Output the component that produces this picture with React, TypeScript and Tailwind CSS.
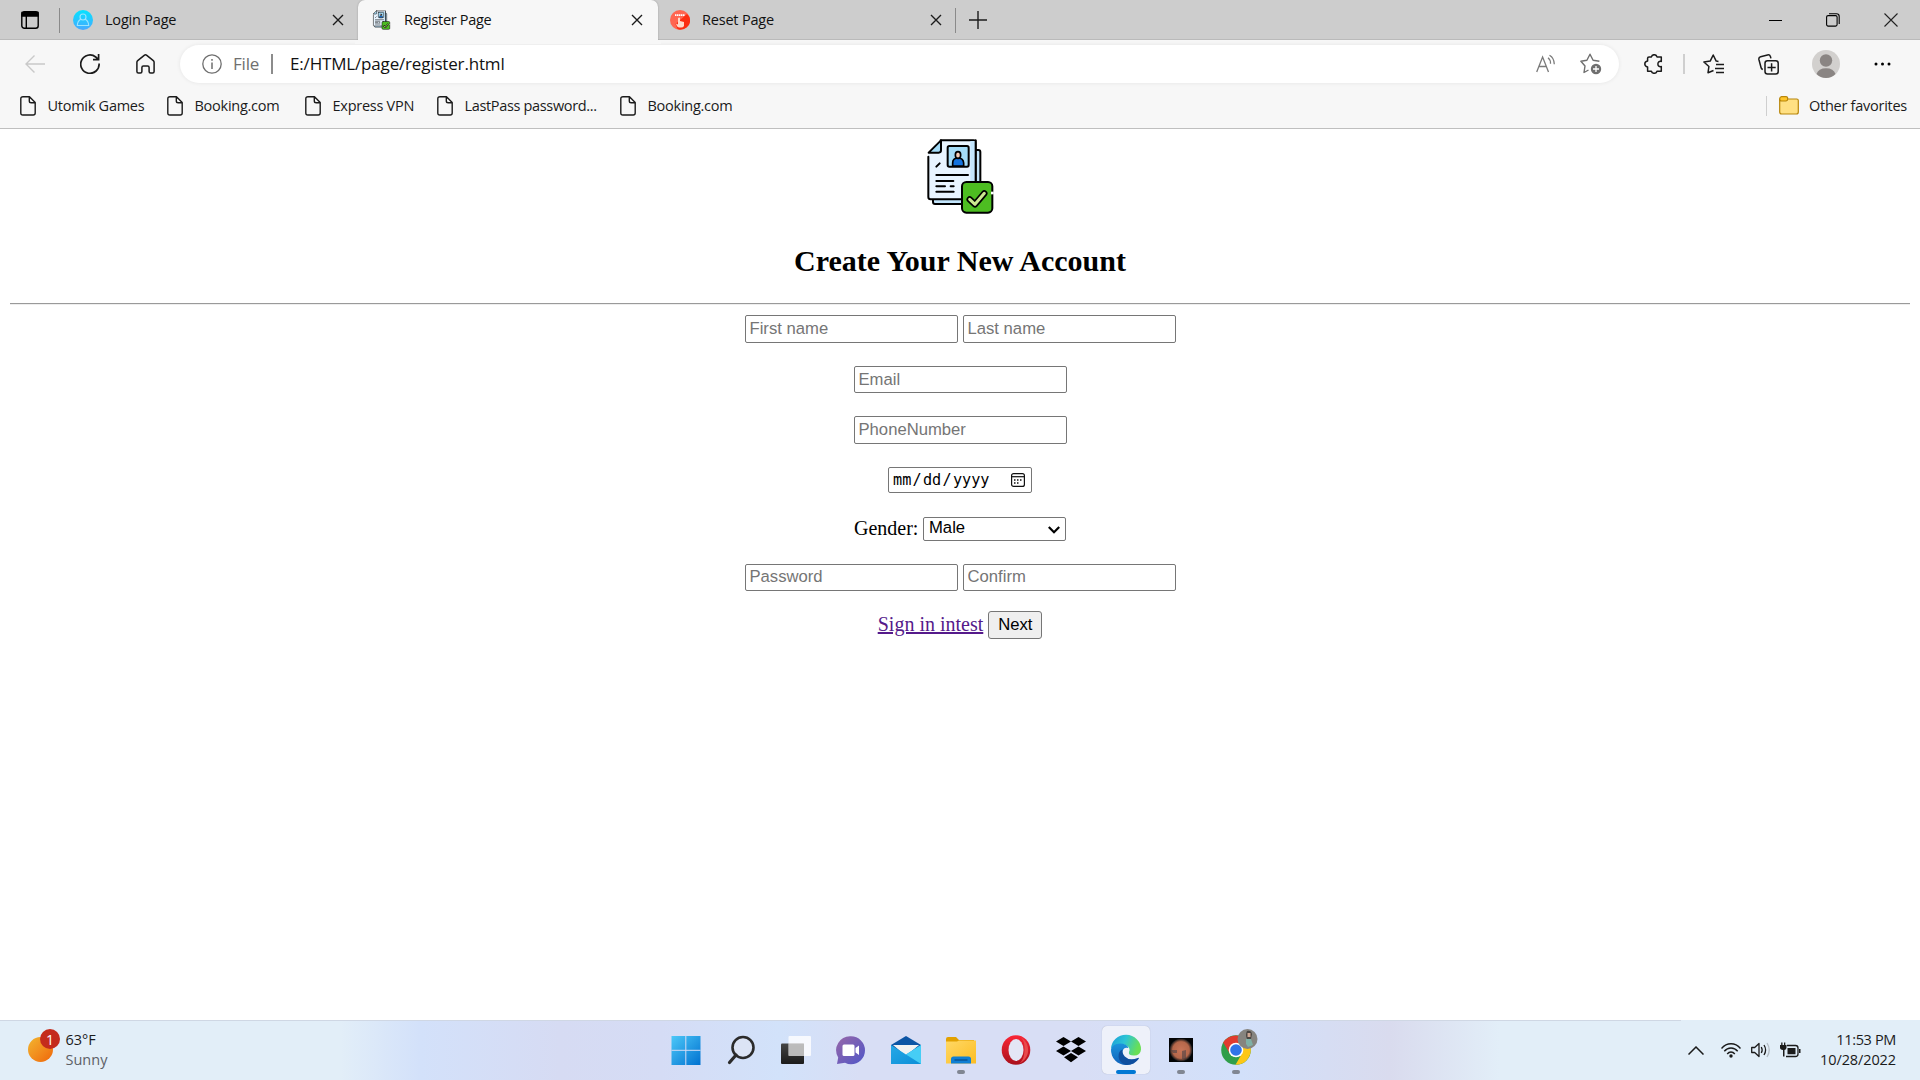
import React from "react";

const ui = "font-['Open_Sans','Noto_Sans',sans-serif]";

function Close() {
  return (
    <svg width="12" height="12" viewBox="0 0 12 12" className="shrink-0" fill="none" stroke="#1b1b1b" strokeWidth="1.35">
      <path d="M1 1l10 10M11 1L1 11" />
    </svg>
  );
}

function DocumentArt({ className }: { className: string }) {
  return (
    <svg className={className} viewBox="0 0 270 276" fill="none" strokeLinecap="round" strokeLinejoin="round" stroke="#000" strokeWidth="6">
      <path d="M60 60h130q6 0 6 6v150q0 6-6 6H60q-6 0-6-6V60z" fill="#c3e6fd" />
      <path d="M77 31h98q7 0 7 7v163q0 7-7 7H47q-7 0-7-7V68z" fill="#e8f4ff" stroke="none" />
      <path d="M40 80v121q0 7 7 7h92M77 31h98q7 0 7 7v117" />
      <path d="M166 33h14v120h-14z" fill="#c3e6fd" stroke="none" />
      <path d="M182 31v122" />
      <path d="M78 31v30q0 7-7 7H41z" fill="#a4dcf8" />
      <rect x="98" y="48" width="63" height="62" rx="5" fill="#a4dcf8" />
      <path d="M113 108v-9q0-15 16-15t17 15v9z" fill="#1373de" strokeWidth="5" />
      <ellipse cx="129" cy="75" rx="8" ry="10" fill="#f8cdb9" strokeWidth="5" />
      <path d="M64 110l10-10M64 135h95M64 153h51M64 169h26M107 169h9M64 185h52" />
      <rect x="141" y="156" width="91" height="92" rx="13" fill="#4dbd21" />
      <path d="M232 185v8" stroke="#fff" strokeWidth="8" strokeLinecap="butt" />
      <path d="M164 208l16 15 28-33" strokeWidth="19" />
      <path d="M164 208l16 15 28-33" stroke="#cbe98f" strokeWidth="9" />
    </svg>
  );
}

function PageIcon() {
  return (
    <svg width="16" height="20" viewBox="0 0 16 20" className="shrink-0" fill="none" stroke="#1b1b1b" strokeWidth="1.4" strokeLinejoin="round">
      <path d="M3 .8h6.500L15.200 6.600V17q0 2-2 2H2.800q-2 0-2-2V2.800q0-2 2.200-2zM9.300 1v4q0 1.800 1.800 1.800h4" />
    </svg>
  );
}

function TabStrip() {
  return (
    <div className="relative flex h-10 items-center bg-[#cdcdcd] text-[14.5px] text-[#111]">
      <div className="absolute inset-x-0 bottom-0 h-px bg-[#bababa]" />
      <svg width="18" height="18" viewBox="0 0 18 18" className="ml-[21px]" fill="none" stroke="#000" strokeWidth="1.4">
        <rect x=".8" y=".8" width="16.4" height="16.4" rx="2.5" />
        <path d="M1 1.500h16V5H1z" fill="#000" />
        <path d="M5.300 5v12" />
      </svg>
      <div className="ml-5 h-[25px] w-px bg-[#8a8a8a]" />
      <div className="flex w-[298px] items-center pl-[13px]">
        <svg width="20" height="20" viewBox="0 0 20 20">
          <defs>
            <linearGradient id="login" x1="0" y1="0" x2="0" y2="1">
              <stop stopColor="#05e3ff" />
              <stop offset="1" stopColor="#48a9ff" />
            </linearGradient>
          </defs>
          <circle cx="10" cy="10" r="10" fill="url(#login)" />
          <g fill="none" stroke="#9be4ff" strokeWidth="1.1">
            <circle cx="10" cy="7" r="3" />
            <path d="M7.800 9.300Q4.500 11 4.300 15.500h11.400Q15.500 11 12.200 9.300" />
          </g>
        </svg>
        <span className="ml-3 w-[227px] whitespace-nowrap tracking-[-0.2px]">Login Page</span>
        <Close />
      </div>
      <div className="relative z-10 flex h-10 w-[300px] items-center rounded-t-[7px] bg-[#f7f7f7] pl-[12px] shadow-[0_0_2px_rgba(0,0,0,0.25)]">
        <div className="absolute inset-x-[-3px] -bottom-1 h-1 bg-[#f7f7f7]" />
        <DocumentArt className="h-6 w-[23px]" />
        <span className="ml-[11px] w-[227px] whitespace-nowrap tracking-[-0.3px]">Register Page</span>
        <Close />
      </div>
      <div className="flex w-[297px] items-center pl-3">
        <svg width="20" height="20" viewBox="0 0 20 20">
          <circle cx="10" cy="10" r="10" fill="#ff6550" />
          <path d="M17 4l2.500 3q2 7-3 10.500-4 3-9 1.500l-2-5z" fill="#fb2e12" />
          <path d="M5 5.200h10" stroke="#fff" strokeWidth="1.800" strokeDasharray="1.500 .5" />
          <path d="M8 8q1.500-1.200 2 0v3l4 1v4q-1 2-4 1.500-3 .5-4-4l2 1z" fill="#ffd9c9" />
        </svg>
        <span className="ml-[12px] w-[228px] whitespace-nowrap tracking-[-0.2px]">Reset Page</span>
        <Close />
      </div>
      <div className="h-[25px] w-px bg-[#8a8a8a]" />
      <svg width="18" height="18" viewBox="0 0 18 18" className="ml-[13px]" stroke="#1b1b1b" strokeWidth="1.400">
        <path d="M0 9h18M9 0v18" />
      </svg>
      <div className="mr-[22px] ml-auto flex items-center gap-[44px]">
        <div className="h-px w-[13px] bg-black" />
        <svg width="14" height="14" viewBox="0 0 14 14" fill="none" stroke="#000" strokeWidth="1.100">
          <rect x=".6" y="2.600" width="10.500" height="10.500" rx="1.500" />
          <path d="M3 .7h7.500q2.700 0 2.700 2.700V11" />
        </svg>
        <svg width="14" height="14" viewBox="0 0 14 14" stroke="#222" strokeWidth="1.100">
          <path d="M.5.5l13 13M13.500.5l-13 13" />
        </svg>
      </div>
    </div>
  );
}

function Toolbar() {
  return (
    <div className="flex h-12 items-center bg-[#f7f7f7]">
      <svg width="20" height="18" viewBox="0 0 20 18" className="ml-[25px]" fill="none" stroke="#c9c9c9" strokeWidth="1.400">
        <path d="M20 9H1M9.500.500L1 9l8.500 8.500" />
      </svg>
      <svg width="20" height="20" viewBox="0 0 20 20" className="ml-[35px]" fill="none" stroke="#1b1b1b" strokeWidth="1.700">
        <path d="M19.100 9.500a9.200 9.200 0 1 1-3.400-6.500L18.300 5.300M18.600 0v5.600H13" />
      </svg>
      <svg width="19" height="20" viewBox="0 0 19 20" className="ml-[36px]" fill="none" stroke="#1b1b1b" strokeWidth="1.500" strokeLinejoin="round">
        <path d="M.9 8.300q0-1 .8-1.700L8.200 1.300q1.300-1 2.600 0l6.500 5.300q.8.700.8 1.700v9.200q0 1.500-1.500 1.500h-2q-1.500 0-1.500-1.500v-4q0-1.500-1.500-1.500H7.400q-1.500 0-1.500 1.500v4q0 1.500-1.500 1.500h-2q-1.500 0-1.500-1.500z" />
      </svg>
      <div className="ml-[25px] flex h-[38px] w-[1439px] items-center rounded-full bg-white text-[17px] shadow-[0_0_4px_rgba(0,0,0,0.08)]">
        <svg width="20" height="20" viewBox="0 0 20 20" className="ml-[22px]" fill="none" stroke="#6f6f6f" strokeWidth="1.300">
          <circle cx="10" cy="10" r="9.200" />
          <path d="M10 8.500V15M10 5v1.800" strokeWidth="1.500" />
        </svg>
        <span className="ml-[11px] w-[38px] tracking-[-0.2px] text-[#6f6f6f]">File</span>
        <div className="h-5 w-0.5 bg-[#8c8c8c]" />
        <span className="ml-[17px] whitespace-nowrap tracking-[-0.17px] text-[#111]">E:/HTML/page/register.html</span>
        <svg width="20" height="20" viewBox="0 0 20 20" className="ml-auto" fill="none" stroke="#7a7a7a" strokeWidth="1.300">
          <path d="M.700 18L6.600 3l5.900 15M2.800 12.500h7.600M12 3.700q2.700 2 2.500 6M13.500 1.300q4.600 2.500 4.800 9" />
        </svg>
        <svg width="22" height="22" viewBox="0 0 22 22" className="mr-[17px] ml-[24px]" fill="none" stroke="#6f6f6f" strokeWidth="1.400" strokeLinejoin="round">
          <path d="M8.500 17l-4.500 2.500 1-6.500L.900 8.300l6-1L10 1.200l3.100 6.100 6.300 1" />
          <circle cx="16" cy="16" r="5.200" fill="#6f6f6f" stroke="none" />
          <path d="M16 13v6M13 16h6" stroke="#fff" strokeWidth="1.300" />
        </svg>
      </div>
      <svg width="19" height="20" viewBox="0 0 19 20" className="ml-[25px]" fill="none" stroke="#1b1b1b" strokeWidth="1.500" strokeLinejoin="round">
        <path d="M5 2.900h2.400q.6-2.200 2.800-2.200T13 2.900h4.300v4.500q-3.400-.5-3.400 2.600t3.400 2.600v4.600H13q-.6 2.100-2.800 2.100t-2.800-2.100H3.600v-4.300Q.800 12.300.800 10t2.800-2.900V4.300q0-1.400 1.400-1.400z" />
      </svg>
      <div className="ml-[20px] h-5 w-0.5 bg-[#cfcfcf]" />
      <svg width="21" height="20" viewBox="0 0 21 20" className="ml-[18px]" fill="none" stroke="#1b1b1b" strokeWidth="1.500" strokeLinejoin="round">
        <path d="M10.500 16.500L5 18.800l.9-6.300L.900 8l6.300-.9L10.200 1l3 6.100 2.300.3M13 10.500h8M12 14.500h9M13 18.500h8" />
      </svg>
      <svg width="21" height="21" viewBox="0 0 21 21" className="ml-[34px]" fill="none" stroke="#1b1b1b" strokeWidth="1.500" strokeLinejoin="round">
        <path d="M4.800 15.500q-1.300-.4-1.700-1.800L.900 5.500Q.500 3.300 2.600 2.700L9.500.900q2.200-.5 2.900 1.500l.5 2" />
        <rect x="7" y="6.800" width="13.200" height="13.200" rx="2.500" />
        <path d="M13.600 9.300v8.200M9.500 13.400h8.200" />
      </svg>
      <svg width="28" height="28" viewBox="0 0 28 28" className="ml-[33px]">
        <circle cx="14" cy="14" r="14" fill="#d2d0ce" />
        <circle cx="14" cy="10.500" r="6.200" fill="#8a8583" />
        <path d="M4.500 24q2-5.800 9.500-5.800t9.500 5.800q-4 4-9.500 4t-9.500-4z" fill="#8a8583" />
      </svg>
      <svg width="17" height="4" viewBox="0 0 17 4" className="ml-[34px]">
        <circle cx="2" cy="2" r="1.500" />
        <circle cx="8.500" cy="2" r="1.500" />
        <circle cx="15" cy="2" r="1.500" />
      </svg>
    </div>
  );
}

function Favorite({ label, className }: { label: string; className: string }) {
  return (
    <div className={`flex items-center gap-[11.5px] whitespace-nowrap ${className}`}>
      <PageIcon />
      <span>{label}</span>
    </div>
  );
}

function FavoritesBar() {
  return (
    <div className="flex h-[41px] items-start border-b border-[#bfbfbf] bg-[#f7f7f7] pl-5 text-[14.5px] tracking-[-0.26px] text-[#1b1b1b]">
      <div className="flex h-[35px] grow items-center">
        <Favorite label="Utomik Games" className="w-[147px]" />
        <Favorite label="Booking.com" className="w-[138px]" />
        <Favorite label="Express VPN" className="w-[132px]" />
        <Favorite label="LastPass password..." className="w-[183px] tracking-[-0.34px]" />
        <Favorite label="Booking.com" className="w-[140px]" />
        <div className="ml-auto h-5 w-px bg-[#cfcfcf]" />
        <svg width="20" height="19" viewBox="0 0 20 19" className="ml-3" stroke="#b8860b" strokeWidth="1.200">
          <path d="M.700 3h17q1.600 0 1.600 1.600V16q0 2-2 2H2.700q-2 0-2-2z" fill="#ffe083" />
          <path d="M2.500.700H7q1.700 0 1.700 2T7 5H2.500Q.700 5 .700 3t1.800-2.300z" fill="#ffc62b" />
        </svg>
        <span className="ml-[10px] w-[111px] whitespace-nowrap">Other favorites</span>
      </div>
    </div>
  );
}

const field =
  "w-[213px] rounded-[2px] border border-[#767676] bg-white pl-1 font-['Liberation_Sans',Arial,sans-serif] text-[16.67px] leading-[19px] text-black placeholder:text-[#757575] placeholder:opacity-100 outline-none";

function RegisterPage() {
  return (
    <main className="flex grow flex-col items-center bg-white font-['Liberation_Serif','Times_New_Roman',serif] text-[20px] text-black">
      <DocumentArt className="mt-px h-[92px] w-[90px]" />
      <h2 className="mt-[19px] text-[30px] leading-[40px] font-bold">Create Your New Account</h2>
      <hr className="mt-[22px] h-0.5 w-[1900px] border-t border-b border-t-[#9a9a9a] border-b-[#eeeeee]" />
      <div className="mt-[10px] flex gap-[5px]">
        <input className={`h-7 ${field}`} placeholder="First name" />
        <input className={`h-7 ${field}`} placeholder="Last name" />
      </div>
      <input className={`mt-[23px] h-[27px] ${field}`} placeholder="Email" />
      <input className={`mt-[23px] h-7 ${field}`} placeholder="PhoneNumber" />
      <div className="mt-[23px] flex h-[26px] w-[144px] items-center rounded-[2px] border border-[#767676] pl-1 font-['DejaVu_Sans_Mono',monospace] text-[15.2px] leading-6">
        <span>mm</span>
        <span className="mx-[1.25px]">/</span>
        <span>dd</span>
        <span className="mx-[1.25px]">/</span>
        <span>yyyy</span>
        <svg width="14" height="14" viewBox="0 0 14 14" className="mr-1.5 ml-auto" fill="none" stroke="#111" strokeWidth="1.200">
          <rect x=".600" y=".600" width="12.800" height="12.800" rx="2" />
          <path d="M.600 3.700h12.800" />
          <path d="M6 7h1.500M9 7h1.500M3 7h1.500M3 10h1.500M6 10h1.500" strokeWidth="1.600" />
        </svg>
      </div>
      <div className="mt-6 flex h-6 items-start">
        <label className="-mt-px w-[69px] leading-6">Gender:</label>
        <div className="relative flex h-6 w-[143px]">
          <select className="block h-6 w-full appearance-none rounded-[2px] border border-[#767676] bg-white pb-0.5 pl-[5px] font-['Liberation_Sans',Arial,sans-serif] text-[16.67px] leading-5">
            <option>Male</option>
          </select>
          <svg width="12" height="8" viewBox="0 0 12 8" className="absolute top-[9px] right-[6px]" fill="none" stroke="#000" strokeWidth="2.200">
            <path d="M.8 1L6 6.200 11.200 1" />
          </svg>
        </div>
      </div>
      <div className="mt-[23px] flex gap-[5px]">
        <input className={`h-[27px] pb-0.5 ${field}`} placeholder="Password" />
        <input className={`h-[27px] pb-0.5 ${field}`} placeholder="Confirm" />
      </div>
      <div className="mt-5 flex h-7 items-start">
        <a className="mt-px mr-[5px] leading-6 text-[#551a8b] underline decoration-[1.5px]">Sign in intest</a>
        <button className="h-7 w-[54px] rounded-[3px] border border-[#767676] bg-[#efefef] font-['Liberation_Sans',Arial,sans-serif] text-[16.67px] leading-5">
          Next
        </button>
      </div>
    </main>
  );
}

function Slot({ children, mark }: { children: React.ReactNode; mark?: "open" | "active" }) {
  return (
    <div className="relative flex h-full w-[55px] items-center justify-center">
      {mark === "active" && <div className="absolute top-[6px] left-[3.5px] h-12 w-12 rounded-[5px] bg-[#eef1fa] shadow-[0_0_1px_rgba(0,0,0,0.25)]" />}
      <svg width="30" height="30" viewBox="0 0 30 30" className="relative overflow-visible">
        {children}
      </svg>
      {mark === "open" && <div className="absolute bottom-[6px] h-1 w-2 rounded-full bg-[#808692]" />}
      {mark === "active" && <div className="absolute bottom-[6px] h-1 w-5 rounded-full bg-[#0078d4]" />}
    </div>
  );
}

function Gradient({ id, a, b, v }: { id: string; a: string; b: string; v?: boolean }) {
  return (
    <linearGradient id={id} x1="0" y1="0" x2={v ? "0" : "1"} y2="1">
      <stop stopColor={a} />
      <stop offset="1" stopColor={b} />
    </linearGradient>
  );
}

function Taskbar() {
  return (
    <footer className="relative flex h-[60px] items-center bg-[linear-gradient(90deg,#e2eef8_0px,#e2eef8_340px,#d3e1fa_420px,#d6dbf3_560px,#d5dcf5_660px,#d2e2fa_780px,#d8def5_860px,#d8def5_1080px,#d2e0fa_1240px,#d9dbee_1390px,#e2eef8_1500px,#e2eef8_1920px)]">
      <div className="absolute top-0 left-0 h-px w-[1681px] bg-[#cfd7e4]" />
      <div className="flex w-[658px] shrink-0 items-center pl-7">
        <div className="relative h-[50px] w-[32px]">
          <div className="absolute top-[12px] left-0 h-[25px] w-[25px] rounded-full bg-linear-to-br from-[#f1b52f] to-[#ee6407]" />
          <div className="absolute top-[4px] left-[12px] flex h-5 w-5 items-center justify-center rounded-full bg-[#c42b1c] text-[14px] text-white">1</div>
        </div>
        <div className="ml-[5.5px] text-[14.5px] leading-5 text-[#1b1b1b]">
          <div>63°F</div>
          <div className="text-[#5d6066]">Sunny</div>
        </div>
      </div>
      <div className="flex h-full shrink-0">
        <Slot>
          <Gradient id="win" a="#4cc8f8" b="#0071d0" />
          <path d="M.500 1h29v29H.500z" fill="url(#win)" />
          <path d="M14.800 1V30M.500 15.300h29" stroke="#d5dcf5" />
        </Slot>
        <Slot>
          <circle cx="17" cy="12.500" r="10.500" fill="#dce4f5" stroke="#2b2b2b" strokeWidth="2.600" />
          <path d="M10 20L3.500 27.500" stroke="#2b2b2b" strokeWidth="3.200" strokeLinecap="round" />
        </Slot>
        <Slot>
          <Gradient id="tv" a="#444" b="#1b1b1b" v />
          <rect x="0" y="8.500" width="23" height="20.500" rx="1" fill="url(#tv)" />
          <rect x="7.500" y="1" width="22.500" height="20" rx="1" fill="#fff" fillOpacity=".8" />
          <path d="M7.500 8.500H23V21H7.500z" fill="#a9a9a9" fillOpacity=".6" />
        </Slot>
        <Slot>
          <Gradient id="chat" a="#9867a8" b="#4f56c8" />
          <path d="M15 1.300a14 14 0 0 1 0 28q-3 0-6-1.500L1 29l1.200-6.500A14 14 0 0 1 15 1.300z" fill="url(#chat)" />
          <rect x="6.500" y="9.500" width="12" height="11.500" rx="1.500" fill="#fff" />
          <path d="M19.500 13l3.500-2.500V20l-3.500-2.500z" fill="#fff" />
        </Slot>
        <Slot>
          <Gradient id="mail" a="#27a8e6" b="#0c8fd8" />
          <path d="M0 10L15 1l15 9v10H0z" fill="#0c55a5" />
          <path d="M2 10h26L15 21z" fill="#f2f2f2" />
          <path d="M0 10l15 9.500L30 10v19H0z" fill="url(#mail)" />
          <path d="M30 10v19L15 19.500z" fill="#46cdf5" />
        </Slot>
        <Slot mark="open">
          <Gradient id="fold" a="#ffd866" b="#fcbd22" />
          <path d="M0 4q0-2 2-2h8l3 3h15v10H0z" fill="#e2a100" />
          <path d="M0 6.500h11l2-1h17v23H0z" fill="url(#fold)" />
          <path d="M5 28.500V24q0-2.500 2.500-2.500h15Q25 21.500 25 24v4.500z" fill="#0f7fd4" />
          <path d="M8.500 25h13" stroke="#0a5496" strokeWidth="1.500" />
        </Slot>
        <Slot>
          <Gradient id="op" a="#fa2536" b="#a9101c" v />
          <ellipse cx="15" cy="15" rx="14.300" ry="14.700" fill="url(#op)" />
          <path d="M15 .500a14.500 14.700 0 0 1 0 29q8-1 8.500-14.500T15 .500z" fill="#e84a4d" />
          <ellipse cx="15" cy="15" rx="7.500" ry="11" fill="#e4e6f5" />
        </Slot>
        <Slot>
          <path d="M7.500 2L15 6.500 7.500 11 0 6.500zM22.500 2L30 6.500 22.500 11 15 6.500zM7.500 11.500L15 16l-7.500 4.500L0 16zM22.500 11.500L30 16l-7.500 4.500L15 16zM15 18l7 4.200-7 5-7-5z" />
        </Slot>
        <Slot mark="active">
          <linearGradient id="edgeTop" x1="0" y1="0" x2="1" y2=".3">
            <stop stopColor="#199bd8" />
            <stop offset=".5" stopColor="#2cc4d6" />
            <stop offset="1" stopColor="#69df55" />
          </linearGradient>
          <Gradient id="edgeLow" a="#1b93dc" b="#1162ba" v />
          <path d="M0 14A15 14.500 0 0 1 30 14.500q-.5 6-7 6-6 0-5-3.500 1.500-3-1-5.500Q9 6 0 14z" fill="url(#edgeTop)" />
          <path d="M0 14.500Q1.500 8.500 9 8.500q7 0 8.500 4.500-4.500-1.500-6 3-1.500 7 4.500 10.500 3 1.800 6.500 1.500-3 2-7.500 2A15 15 0 0 1 0 14.500z" fill="url(#edgeLow)" />
          <path d="M11.600 14.500q-4.600 1.500-4 7.500.8 6 7.400 8 8 .5 12.800-6.200.4-1.300-1-.9-8.300 3.300-13-1.400-3-3.500-2.200-7z" fill="#0f4f9f" />
        </Slot>
        <Slot mark="open">
          <radialGradient id="mars">
            <stop stopColor="#c87558" />
            <stop offset=".72" stopColor="#b5674a" />
            <stop offset="1" stopColor="#0b1216" />
          </radialGradient>
          <path d="M3 3h24v24H3z" fill="#030405" />
          <circle cx="15" cy="15" r="11.500" fill="url(#mars)" />
          <path d="M16 16l4-1v9h-4zM5 15h6v3H7z" fill="#353943" opacity=".5" />
        </Slot>
        <Slot mark="open">
          <circle cx="15" cy="15" r="14.800" fill="#2f9e4a" />
          <path d="M15 8h13a14.800 14.800 0 0 1-13.500 21.800L21 18.500z" fill="#fdc716" />
          <path d="M2.200 7.600A14.800 14.800 0 0 1 27.800 8H15l-6 11z" fill="#e13b2f" />
          <circle cx="15" cy="15" r="7.300" fill="#fff" />
          <circle cx="15" cy="15" r="5.800" fill="#2f74e8" />
          <circle cx="26.500" cy="4" r="10" fill="#86847f" />
          <path d="M26-4q4-1 5 3l-1 5h-4q-2-4 0-8z" fill="#4b4643" />
          <path d="M26.500-2h3v4h-3z" fill="#cfa793" />
          <path d="M25 4h5l2 6-5 2-2-3z" fill="#7fb0a6" />
        </Slot>
      </div>
      <svg width="16" height="9" viewBox="0 0 16 9" className="ml-[425px] shrink-0" fill="none" stroke="#1b1b1b" strokeWidth="1.500">
        <path d="M.500 8.500L8 1l7.500 7.500" />
      </svg>
      <svg width="20" height="15" viewBox="0 0 20 15" className="ml-[17px] shrink-0" fill="none" stroke="#1b1b1b" strokeWidth="1.400">
        <path d="M.500 5.500Q4.500.800 10 .800t9.500 4.700M3.300 8.300Q6 5 10 5t6.700 3.300M6.200 11Q7.800 9 10 9t3.800 2" />
        <circle cx="10" cy="13" r="1.700" fill="#1b1b1b" stroke="none" />
      </svg>
      <svg width="20" height="16" viewBox="0 0 20 16" className="ml-[10px] shrink-0" fill="none" stroke="#1b1b1b" strokeWidth="1.300" strokeLinejoin="round">
        <path d="M.700 5.500h3L8 1.500v13l-4.300-4h-3zM10.300 5q1.700 3 0 6M13 3q3.200 5 0 10" />
        <path d="M16 1q4.500 7 0 14" stroke="#b4bcc4" />
      </svg>
      <svg width="21" height="17" viewBox="0 0 21 17" className="ml-[9px] shrink-0" fill="none" stroke="#1b1b1b" strokeWidth="1.300">
        <path d="M7 3.500h8.500q2.500 0 2.500 2.500v6q0 2.500-2.500 2.500H6" />
        <path d="M7.500 6h8v6.300h-8zM19 7h1.500v4H19zM0 3h6.500v2.500q0 2-2 2.500v6.500H3V8Q0 7.500 0 5.500zM1.200.500h1.300V3H1.200zM4 .500h1.300V3H4z" fill="#1b1b1b" stroke="none" />
      </svg>
      <div className="mr-6 ml-auto text-right text-[14.5px] leading-5 tracking-[-0.1px] text-[#1b1b1b]">
        <div className="tracking-[-0.35px]">11:53 PM</div>
        <div>10/28/2022</div>
      </div>
    </footer>
  );
}

export default function App() {
  return (
    <div className={`flex h-[1080px] w-[1920px] flex-col overflow-hidden ${ui}`}>
      <TabStrip />
      <Toolbar />
      <FavoritesBar />
      <RegisterPage />
      <Taskbar />
    </div>
  );
}
